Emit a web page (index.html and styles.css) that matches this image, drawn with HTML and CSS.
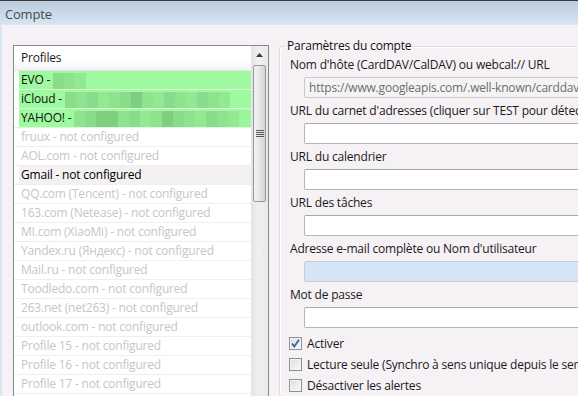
FILE: index.html
```html
<!DOCTYPE html>
<html lang="fr">
<head>
    <meta charset="UTF-8">
    <title>Compte</title>
    <link rel="stylesheet" href="styles.css">
</head>
<body>
<div class="window">
    <div class="titlebar">Compte</div>
    <div class="client">
        <div class="listbox">
            <div class="listbody">
                <div class="header">Profiles</div>
                <ul class="rows">
                    <li class="row on"><span class="cell">EVO - <span class="blur"><i class="b2"></i><i class="b1"></i><i class="b3"></i></span></span></li>
                    <li class="row on"><span class="cell">iCloud - <span class="blur"><i class="b2"></i><i class="b1"></i><i class="b2"></i><i class="b3"></i><i class="b1"></i><i class="b2"></i><i class="b4"></i><i class="b1"></i><i class="b3"></i><i class="b2"></i><i class="b1"></i><i class="b3"></i><i class="b2"></i><i class="b1"></i><i class="b3"></i></span></span></li>
                    <li class="row on"><span class="cell">YAHOO! - <span class="blur"><i class="b1"></i><i class="b2"></i><i class="b4"></i><i class="b4"></i><i class="b1"></i><i class="b2"></i><i class="b3"></i><i class="b1"></i><i class="b4"></i><i class="b2"></i><i class="b1"></i><i class="b3"></i><i class="b2"></i><i class="b1"></i><i class="b3"></i><i class="b0"></i></span></span></li>
                    <li class="row off"><span class="cell">fruux - not configured</span></li>
                    <li class="row off"><span class="cell">AOL.com - not configured</span></li>
                    <li class="row sel"><span class="cell">Gmail - not configured</span></li>
                    <li class="row off"><span class="cell">QQ.com (Tencent) - not configured</span></li>
                    <li class="row off"><span class="cell">163.com (Netease) - not configured</span></li>
                    <li class="row off"><span class="cell">MI.com (XiaoMi) - not configured</span></li>
                    <li class="row off"><span class="cell">Yandex.ru (Яндекс) - not configured</span></li>
                    <li class="row off"><span class="cell">Mail.ru - not configured</span></li>
                    <li class="row off"><span class="cell">Toodledo.com - not configured</span></li>
                    <li class="row off"><span class="cell">263.net (net263) - not configured</span></li>
                    <li class="row off"><span class="cell">outlook.com - not configured</span></li>
                    <li class="row off"><span class="cell">Profile 15 - not configured</span></li>
                    <li class="row off"><span class="cell">Profile 16 - not configured</span></li>
                    <li class="row off"><span class="cell">Profile 17 - not configured</span></li>
                </ul>
            </div>
            <div class="scrollbar">
                <div class="arrow">
                    <svg width="7" height="4" viewBox="0 0 7 4"><path d="M0 4 L3.5 0 L7 4 Z" fill="#3c3c3c"/></svg>
                </div>
                <div class="thumb">
                    <svg width="8" height="8" viewBox="0 0 8 8"><path d="M0 0.5H8M0 2.5H8M0 4.5H8M0 6.5H8" stroke="#5a5a5a" stroke-width="1"/></svg>
                </div>
            </div>
        </div>

        <fieldset class="group">
            <legend>Paramètres du compte</legend>
            <label class="lbl">Nom d'hôte (CardDAV/CalDAV) ou webcal:// URL</label>
            <div class="field disabled">https://www.googleapis.com/.well-known/carddav</div>
            <label class="lbl">URL du carnet d'adresses (cliquer sur TEST pour détecter)</label>
            <div class="field"></div>
            <label class="lbl">URL du calendrier</label>
            <div class="field"></div>
            <label class="lbl">URL des tâches</label>
            <div class="field"></div>
            <label class="lbl">Adresse e-mail complète ou Nom d'utilisateur</label>
            <div class="field focus"></div>
            <label class="lbl">Mot de passe</label>
            <div class="field"></div>
            <div class="checks">
                <div class="check">
                    <span class="box">
                        <svg width="9" height="9" viewBox="0 0 9 9"><path d="M1 4.5 L3.3 7.5 L8 0.8" fill="none" stroke="#3b5ba5" stroke-width="1.8"/></svg>
                    </span>
                    Activer
                </div>
                <div class="check"><span class="box"></span>Lecture seule (Synchro à sens unique depuis le serveur)</div>
                <div class="check"><span class="box"></span>Désactiver les alertes</div>
            </div>
        </fieldset>
    </div>
</div>
</body>
</html>
```

FILE: styles.css
```css
html, body {
    margin: 0;
    height: 100%;
    overflow: hidden;
}

body {
    font: 12px/16px "Open Sans", "Noto Sans", sans-serif;
    letter-spacing: -0.2px;
    color: #1a1a1a;
    background: #f5f1f5;
}

.window {
    display: flex;
    flex-direction: column;
    height: 100%;
}

.titlebar {
    height: 24px;
    line-height: 26px;
    padding-left: 5px;
    color: #4a4a4a;
    font-size: 13px;
    border-top: 1px solid #3a3a3a;
    background: linear-gradient(#b9cbdc, #d8e6f5);
}

.client {
    flex: 1;
    display: flex;
    align-items: flex-start;
    border-left: 2px solid #d9e5f3;
    background: #f5f1f5;
    padding-top: 20px;
}

/* liste des profils */
.listbox {
    flex: none;
    display: flex;
    width: 254px;
    height: 400px;
    margin-left: 11px;
    border: 1px solid #848892;
    background: #fff;
}

.listbody {
    flex: 1;
}

.header {
    height: 24px;
    line-height: 24px;
    padding-left: 7px;
    color: #1a1a1a;
    background: linear-gradient(#fff 60%, #f1f2f5);
    border-bottom: 1px solid #e2e3ea;
}

.rows {
    margin: 0;
    padding: 0;
    list-style: none;
}

.row {
    height: 18px;
    border-bottom: 1px solid #efefef;
}

.row .cell {
    display: flex;
    align-items: center;
    height: 18px;
    margin-left: 5px;
    padding-left: 2px;
    white-space: pre;
}

.row.on .cell {
    background: #9efa9e;
    color: #111;
}

.row.on {
    border-bottom-color: #dff7df;
}

.row.off .cell {
    color: #c6c6c6;
}

.row.sel .cell {
    background: #f4f0f4;
    color: #000;
}

.blur {
    display: flex;
    height: 16px;
    margin-top: 1px;
}

.blur i {
    width: 11px;
    height: 16px;
}

.blur .b0 { background: #9bf59b; }
.blur .b1 { background: #8fe38f; }
.blur .b2 { background: #89dc89; }
.blur .b3 { background: #93e993; }
.blur .b4 { background: #7ed07e; }

/* barre de défilement */
.scrollbar {
    flex: none;
    width: 17px;
    background: linear-gradient(90deg, #e3e3e3, #f0f0f0 40%, #eaeaea);
    display: flex;
    flex-direction: column;
    align-items: center;
}

.arrow {
    height: 18px;
    display: flex;
    align-items: center;
    justify-content: center;
}

.thumb {
    width: 11px;
    height: 135px;
    margin-top: 1px;
    border: 1px solid #989898;
    border-radius: 2px;
    background: linear-gradient(90deg, #f2f2f2, #e6e6e6 50%, #d4d4d4);
    display: flex;
    align-items: center;
    justify-content: center;
}

/* paramètres */
.group {
    flex: none;
    width: 400px;
    margin: -7px 0 0 10px;
    padding: 3px 0 0 10px;
    border: 1px solid #d5dfe5;
    border-radius: 3px;
    box-shadow: inset 1px 1px 0 #fff;
    display: flex;
    flex-direction: column;
    align-items: flex-start;
}

.group legend {
    padding: 0 1px;
    margin-left: -4px;
    color: #111;
}

.lbl {
    display: block;
    white-space: nowrap;
    height: 16px;
    margin-bottom: 4px;
}

.field {
    box-sizing: border-box;
    width: 380px;
    height: 21px;
    margin: 0 0 5px 14px;
    border: 1px solid #b5b5b8;
    border-top-color: #a6a7ab;
    border-radius: 2px;
    background: #fff;
    padding-left: 4px;
    line-height: 19px;
    white-space: nowrap;
}

.field.disabled {
    background: #f4f4f4;
    color: #6d6d6d;
    border-color: #c9c9cb;
}

.field.focus {
    background: #d6e5f5;
    border-color: #c3ccd6;
}

.checks {
    margin: 0 0 0 -1px;
}

.check {
    display: flex;
    align-items: center;
    height: 21px;
    white-space: nowrap;
}

.box {
    box-sizing: border-box;
    width: 13px;
    height: 13px;
    margin-right: 5px;
    border: 1px solid #8e8f8f;
    background: linear-gradient(135deg, #dcdcdc, #fbfbfb);
    box-shadow: inset 0 0 0 1px #f4f4f4;
    display: flex;
    align-items: center;
    justify-content: center;
}
```
